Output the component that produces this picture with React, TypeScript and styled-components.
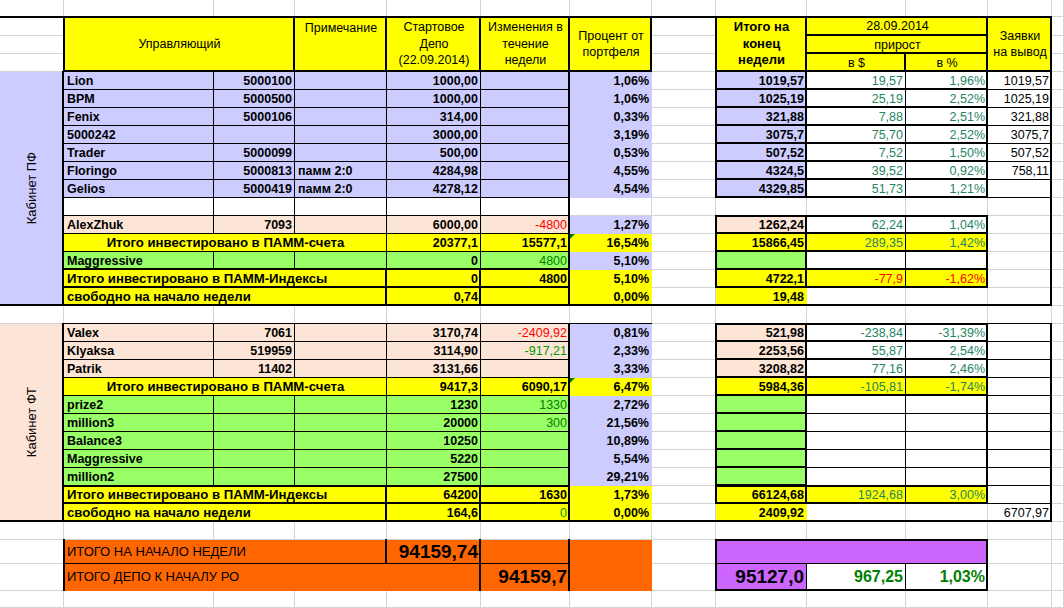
import React from 'react';
import styled, { createGlobalStyle, css } from 'styled-components';

const GRID = '#d4d4d4';
const YEL = '#ffff00';
const LAV = '#ccccff';
const PEACH = '#fce4d6';
const GRN = '#99ff66';
const ORG = '#ff6600';
const VIO = '#cc66ff';
const TEAL = '#24855f';
const GREEN = '#008000';
const LGREEN = '#009900';
const RED = '#ff0000';
const LBL = 13.2;

const COLS = [64, 150, 81, 92, 94, 89, 82, 64, 91, 99, 82, 64, 12];
const ROWS = [17, 19, 18, 18, ...Array(13).fill(18), 18, ...Array(11).fill(18), 18, 24, 27, 17];

type Spec = {
  r: number;
  c: number;
  rs?: number;
  cs?: number;
  bg?: string;
  t?: string;
  al?: 'l' | 'c' | 'r';
  va?: 't' | 'm';
  b?: boolean;
  col?: string;
  fs?: number;
  bd?: string;
  flag?: boolean;
  rot?: string;
  head?: boolean;
};

const specs: Spec[] = [];
const add = (s: Spec) => specs.push(s);

/* ---------- header ---------- */
add({ r: 2, c: 1, bd: '2000' });
add({ r: 2, c: 8, bd: '2000' });
add({ r: 2, c: 2, cs: 2, rs: 3, bg: YEL, t: 'Управляющий', al: 'c', bd: '2222', head: true });
add({ r: 2, c: 4, rs: 3, bg: YEL, t: 'Примечание', al: 'c', va: 't', bd: '2220', head: true });
add({ r: 2, c: 5, rs: 3, bg: YEL, t: 'Стартовое\nДепо\n(22.09.2014)', al: 'c', bd: '2220', head: true });
add({ r: 2, c: 6, rs: 3, bg: YEL, t: 'Изменения в\nтечение\nнедели', al: 'c', bd: '2220', head: true });
add({ r: 2, c: 7, rs: 3, bg: YEL, t: 'Процент от\nпортфеля', al: 'c', bd: '2220', head: true });
add({ r: 2, c: 9, rs: 3, bg: YEL, t: 'Итого на\nконец\nнедели', al: 'c', b: true, fs: 13, bd: '2222', head: true });
add({ r: 2, c: 10, cs: 2, bg: YEL, t: '28.09.2014', al: 'c', bd: '2220' });
add({ r: 3, c: 10, cs: 2, bg: YEL, t: 'прирост', al: 'c', bd: '0220' });
add({ r: 4, c: 10, bg: YEL, t: 'в $', al: 'c', bd: '0220' });
add({ r: 4, c: 11, bg: YEL, t: 'в %', al: 'c', bd: '0220' });
add({ r: 2, c: 12, rs: 3, bg: YEL, t: 'Заявки\nна вывод', al: 'c', bd: '2220', head: true });

/* ---------- section 1 ---------- */
add({ r: 5, c: 1, rs: 13, bg: LAV, rot: 'Кабинет ПФ', al: 'c', fs: 13, bd: '0220' });

const s1 = [
  ['Lion', '5000100', '', '1000,00', '1,06%', '1019,57', '19,57', '1,96%', '1019,57'],
  ['BPM', '5000500', '', '1000,00', '1,06%', '1025,19', '25,19', '2,52%', '1025,19'],
  ['Fenix', '5000106', '', '314,00', '0,33%', '321,88', '7,88', '2,51%', '321,88'],
  ['5000242', '', '', '3000,00', '3,19%', '3075,7', '75,70', '2,52%', '3075,7'],
  ['Trader', '5000099', '', '500,00', '0,53%', '507,52', '7,52', '1,50%', '507,52'],
  ['Floringo', '5000813', 'памм 2:0', '4284,98', '4,55%', '4324,5', '39,52', '0,92%', '758,11'],
  ['Gelios', '5000419', 'памм 2:0', '4278,12', '4,54%', '4329,85', '51,73', '1,21%', ''],
];
s1.forEach((d, i) => {
  const r = 5 + i;
  add({ r, c: 2, bg: LAV, t: d[0], b: true, bd: '0110' });
  add({ r, c: 3, bg: LAV, t: d[1], al: 'r', b: true, bd: '0110' });
  add({ r, c: 4, bg: LAV, t: d[2], b: true, fs: 12.5, bd: '0110' });
  add({ r, c: 5, bg: LAV, t: d[3], al: 'r', b: true, bd: '0110' });
  add({ r, c: 6, bg: LAV, bd: '0210' });
  add({ r, c: 7, bg: LAV, t: d[4], al: 'r', b: true });
  add({ r, c: 9, bg: LAV, t: d[5], al: 'r', b: true, bd: '0222' });
  add({ r, c: 10, t: d[6], al: 'r', col: TEAL, bd: '0120' });
  add({ r, c: 11, t: d[7], al: 'r', col: TEAL, bd: '0220' });
  add({ r, c: 12, t: d[8], al: 'r', bd: '0210' });
});

// row 12 (empty)
[2, 3, 4, 5].forEach((c) => add({ r: 12, c, bd: '0110' }));
add({ r: 12, c: 6, bd: '0210' });
add({ r: 12, c: 12, bd: '0200' });

// row 13 AlexZhuk
add({ r: 13, c: 2, bg: PEACH, t: 'AlexZhuk', b: true, bd: '0110' });
add({ r: 13, c: 3, bg: PEACH, t: '7093', al: 'r', b: true, bd: '0110' });
add({ r: 13, c: 4, bg: PEACH, bd: '0110' });
add({ r: 13, c: 5, bg: PEACH, t: '6000,00', al: 'r', b: true, bd: '0110' });
add({ r: 13, c: 6, bg: PEACH, t: '-4800', al: 'r', col: RED, bd: '0210' });
add({ r: 13, c: 7, bg: LAV, t: '1,27%', al: 'r', b: true });
add({ r: 13, c: 9, bg: PEACH, t: '1262,24', al: 'r', b: true, bd: '2222' });
add({ r: 13, c: 10, t: '62,24', al: 'r', col: TEAL, bd: '2120' });
add({ r: 13, c: 11, t: '1,04%', al: 'r', col: TEAL, bd: '2220' });
add({ r: 13, c: 12, bd: '0200' });

// row 14 total accounts
add({ r: 14, c: 2, cs: 3, bg: YEL, t: 'Итого инвестировано в ПАММ-счета', al: 'c', b: true, fs: LBL, bd: '0110' });
add({ r: 14, c: 5, bg: YEL, t: '20377,1', al: 'r', b: true, bd: '0110' });
add({ r: 14, c: 6, bg: YEL, t: '15577,1', al: 'r', b: true, bd: '0210' });
add({ r: 14, c: 7, bg: YEL, t: '16,54%', al: 'r', b: true, flag: true });
add({ r: 14, c: 9, bg: YEL, t: '15866,45', al: 'r', b: true, bd: '0222' });
add({ r: 14, c: 10, bg: YEL, t: '289,35', al: 'r', col: TEAL, bd: '0120' });
add({ r: 14, c: 11, bg: YEL, t: '1,42%', al: 'r', col: TEAL, bd: '0220' });
add({ r: 14, c: 12, bd: '0200' });

// row 15 Maggressive
add({ r: 15, c: 2, bg: GRN, t: 'Maggressive', b: true, bd: '0120' });
add({ r: 15, c: 3, bg: GRN, bd: '0120' });
add({ r: 15, c: 4, bg: GRN, bd: '0120' });
add({ r: 15, c: 5, bg: GRN, t: '0', al: 'r', b: true, bd: '0120' });
add({ r: 15, c: 6, bg: GRN, t: '4800', al: 'r', col: GREEN, bd: '0220' });
add({ r: 15, c: 7, bg: LAV, t: '5,10%', al: 'r', b: true });
add({ r: 15, c: 9, bg: GRN, bd: '0222' });
add({ r: 15, c: 10, bd: '0120' });
add({ r: 15, c: 11, bd: '0220' });
add({ r: 15, c: 12, bd: '0200' });

// row 16 total indexes
add({ r: 16, c: 2, cs: 3, bg: YEL, t: 'Итого инвестировано в ПАММ-Индексы', b: true, fs: LBL, bd: '0220' });
add({ r: 16, c: 5, bg: YEL, t: '0', al: 'r', b: true, bd: '0220' });
add({ r: 16, c: 6, bg: YEL, t: '4800', al: 'r', b: true, bd: '0220' });
add({ r: 16, c: 7, bg: YEL, t: '5,10%', al: 'r', b: true });
add({ r: 16, c: 9, bg: YEL, t: '4722,1', al: 'r', b: true, bd: '0222' });
add({ r: 16, c: 10, bg: YEL, t: '-77,9', al: 'r', col: RED, bd: '0120' });
add({ r: 16, c: 11, bg: YEL, t: '-1,62%', al: 'r', col: RED, bd: '0220' });
add({ r: 16, c: 12, bd: '0200' });

// row 17 free
add({ r: 17, c: 2, cs: 3, bg: YEL, t: 'свободно на начало недели', b: true, fs: LBL, bd: '0220' });
add({ r: 17, c: 5, bg: YEL, t: '0,74', al: 'r', b: true, bd: '0220' });
add({ r: 17, c: 6, bg: YEL, bd: '0220' });
add({ r: 17, c: 7, bg: YEL, t: '0,00%', al: 'r', b: true, bd: '0020' });
add({ r: 17, c: 8, bd: '0020' });
add({ r: 17, c: 9, bg: YEL, t: '19,48', al: 'r', b: true, bd: '0020' });
add({ r: 17, c: 10, bd: '0020' });
add({ r: 17, c: 11, bd: '0020' });
add({ r: 17, c: 12, bd: '0220' });

/* ---------- section 2 ---------- */
add({ r: 19, c: 1, rs: 11, bg: PEACH, rot: 'Кабинет ФТ', al: 'c', fs: 13, bd: '0220' });

const s2 = [
  ['Valex', '7061', '3170,74', '-2409,92', RED, '0,81%', '521,98', '-238,84', '-31,39%'],
  ['Klyaksa', '519959', '3114,90', '-917,21', LGREEN, '2,33%', '2253,56', '55,87', '2,54%'],
  ['Patrik', '11402', '3131,66', '', '', '3,33%', '3208,82', '77,16', '2,46%'],
];
s2.forEach((d, i) => {
  const r = 19 + i;
  const top = i === 0 ? '1' : '0';
  const topM = i === 0 ? '2' : '0';
  add({ r, c: 2, bg: PEACH, t: d[0], b: true, bd: top + '110' });
  add({ r, c: 3, bg: PEACH, t: d[1], al: 'r', b: true, bd: top + '110' });
  add({ r, c: 4, bg: PEACH, bd: top + '110' });
  add({ r, c: 5, bg: PEACH, t: d[2], al: 'r', b: true, bd: top + '110' });
  add({ r, c: 6, bg: PEACH, t: d[3], al: 'r', col: d[4], bd: top + '210' });
  add({ r, c: 7, bg: LAV, t: d[5], al: 'r', b: true, bd: top + '000' });
  add({ r, c: 9, bg: PEACH, t: d[6], al: 'r', b: true, bd: topM + '222' });
  add({ r, c: 10, t: d[7], al: 'r', col: TEAL, bd: topM + '120' });
  add({ r, c: 11, t: d[8], al: 'r', col: TEAL, bd: topM + '220' });
  add({ r, c: 12, bd: top + '210' });
});

// row 22 total accounts
add({ r: 22, c: 2, cs: 3, bg: YEL, t: 'Итого инвестировано в ПАММ-счета', al: 'c', b: true, fs: LBL, bd: '0110' });
add({ r: 22, c: 5, bg: YEL, t: '9417,3', al: 'r', b: true, bd: '0110' });
add({ r: 22, c: 6, bg: YEL, t: '6090,17', al: 'r', b: true, bd: '0210' });
add({ r: 22, c: 7, bg: YEL, t: '6,47%', al: 'r', b: true, flag: true });
add({ r: 22, c: 9, bg: YEL, t: '5984,36', al: 'r', b: true, bd: '0222' });
add({ r: 22, c: 10, bg: YEL, t: '-105,81', al: 'r', col: TEAL, bd: '0120' });
add({ r: 22, c: 11, bg: YEL, t: '-1,74%', al: 'r', col: TEAL, bd: '0220' });
add({ r: 22, c: 12, bd: '0210' });

const idx = [
  ['prize2', '1230', '1330', '2,72%'],
  ['million3', '20000', '300', '21,56%'],
  ['Balance3', '10250', '', '10,89%'],
  ['Maggressive', '5220', '', '5,54%'],
  ['million2', '27500', '', '29,21%'],
];
idx.forEach((d, i) => {
  const r = 23 + i;
  add({ r, c: 2, bg: GRN, t: d[0], b: true, bd: '0110' });
  add({ r, c: 3, bg: GRN, bd: '0110' });
  add({ r, c: 4, bg: GRN, bd: '0110' });
  add({ r, c: 5, bg: GRN, t: d[1], al: 'r', b: true, bd: '0110' });
  add({ r, c: 6, bg: GRN, t: d[2], al: 'r', col: GREEN, bd: '0210' });
  add({ r, c: 7, bg: LAV, t: d[3], al: 'r', b: true });
  add({ r, c: 9, bg: GRN, bd: '0222' });
  add({ r, c: 10, bd: '0110' });
  add({ r, c: 11, bd: '0210' });
  add({ r, c: 12, bd: '0210' });
});

// row 28 total indexes
add({ r: 28, c: 2, cs: 3, bg: YEL, t: 'Итого инвестировано в ПАММ-Индексы', b: true, fs: LBL, bd: '2220' });
add({ r: 28, c: 5, bg: YEL, t: '64200', al: 'r', b: true, bd: '2220' });
add({ r: 28, c: 6, bg: YEL, t: '1630', al: 'r', b: true, bd: '2220' });
add({ r: 28, c: 7, bg: YEL, t: '1,73%', al: 'r', b: true });
add({ r: 28, c: 9, bg: YEL, t: '66124,68', al: 'r', b: true, bd: '2222' });
add({ r: 28, c: 10, bg: YEL, t: '1924,68', al: 'r', col: TEAL, bd: '2120' });
add({ r: 28, c: 11, bg: YEL, t: '3,00%', al: 'r', col: TEAL, bd: '2220' });
add({ r: 28, c: 12, bd: '0210' });

// row 29 free
add({ r: 29, c: 2, cs: 3, bg: YEL, t: 'свободно на начало недели', b: true, fs: LBL, bd: '0220' });
add({ r: 29, c: 5, bg: YEL, t: '164,6', al: 'r', b: true, bd: '0220' });
add({ r: 29, c: 6, bg: YEL, t: '0', al: 'r', col: LGREEN, bd: '0220' });
add({ r: 29, c: 7, bg: YEL, t: '0,00%', al: 'r', b: true, bd: '0020' });
add({ r: 29, c: 8, bd: '0020' });
add({ r: 29, c: 9, bg: YEL, t: '2409,92', al: 'r', b: true, bd: '0020' });
add({ r: 29, c: 10, bd: '0020' });
add({ r: 29, c: 11, bd: '0020' });
add({ r: 29, c: 12, t: '6707,97', al: 'r', bd: '0220' });

/* ---------- bottom totals ---------- */
add({ r: 31, c: 2, cs: 3, bg: ORG, t: 'ИТОГО НА НАЧАЛО НЕДЕЛИ', fs: 13, bd: '0212' });
add({ r: 31, c: 5, bg: ORG, t: '94159,74', al: 'r', b: true, fs: 19, bd: '0210' });
add({ r: 31, c: 6, bg: ORG, bd: '0210' });
add({ r: 31, c: 7, bg: ORG });
add({ r: 31, c: 9, cs: 3, bg: VIO, bd: '2212' });
add({ r: 32, c: 2, cs: 4, bg: ORG, t: 'ИТОГО ДЕПО К НАЧАЛУ РО', fs: 13, bd: '0202' });
add({ r: 32, c: 6, bg: ORG, t: '94159,7', al: 'r', b: true, fs: 19, bd: '0200' });
add({ r: 32, c: 7, bg: ORG });
add({ r: 32, c: 9, bg: VIO, t: '95127,0', al: 'r', b: true, fs: 19, bd: '0122' });
add({ r: 32, c: 10, t: '967,25', al: 'r', b: true, fs: 16, col: GREEN, bd: '0120' });
add({ r: 32, c: 11, t: '1,03%', al: 'r', b: true, fs: 16, col: GREEN, bd: '0220' });

/* ---------- fill blanks ---------- */
const occ: boolean[][] = ROWS.map(() => COLS.map(() => false));
specs.forEach((s) => {
  for (let r = s.r; r < s.r + (s.rs ?? 1); r++)
    for (let c = s.c; c < s.c + (s.cs ?? 1); c++) occ[r - 1][c - 1] = true;
});
const cells: Spec[] = [...specs];
ROWS.forEach((_, ri) =>
  COLS.forEach((__, ci) => {
    if (!occ[ri][ci]) cells.push({ r: ri + 1, c: ci + 1 });
  })
);
cells.sort((a, b) => a.r - b.r || a.c - b.c);

/* ---------- styles ---------- */
const GlobalStyle = createGlobalStyle`
  html, body { margin: 0; padding: 0; background: #ffffff; }
  body { font-family: "Liberation Sans", Arial, sans-serif; }
`;

const Sheet = styled.div`
  display: grid;
  grid-template-columns: ${COLS.map((w) => `${w}px`).join(' ')};
  grid-template-rows: ${ROWS.map((h) => `${h}px`).join(' ')};
  width: 1064px;
  height: 608px;
  overflow: hidden;
  color: #000;
`;

const edge = (d: string) => (d === '2' ? 2 : d === '1' ? 1 : 0);

type CellProps = {
  $r: number;
  $c: number;
  $rs: number;
  $cs: number;
  $bg?: string;
  $al: 'l' | 'c' | 'r';
  $va: 't' | 'm';
  $bold: boolean;
  $color: string;
  $fs: number;
  $bd: string;
};

const Cell = styled.div<CellProps>`
  grid-row: ${(p) => `${p.$r} / span ${p.$rs}`};
  grid-column: ${(p) => `${p.$c} / span ${p.$cs}`};
  position: relative;
  box-sizing: border-box;
  min-width: 0;
  background: ${(p) => p.$bg || '#ffffff'};
  border-right: 1px solid ${(p) => p.$bg || GRID};
  border-bottom: 1px solid ${(p) => p.$bg || GRID};
  display: flex;
  align-items: ${(p) => (p.$va === 't' ? 'flex-start' : 'center')};
  justify-content: ${(p) => (p.$al === 'r' ? 'flex-end' : p.$al === 'c' ? 'center' : 'flex-start')};
  text-align: ${(p) => (p.$al === 'r' ? 'right' : p.$al === 'c' ? 'center' : 'left')};
  padding: ${(p) => (p.$va === 't' ? '3px 2px 0 3px' : '0 2px 0 3px')};
  white-space: nowrap;
  font-size: ${(p) => p.$fs}px;
  font-weight: ${(p) => (p.$bold ? 700 : 400)};
  color: ${(p) => p.$color};
  line-height: 14px;
  ${(p) =>
    p.$bd !== '0000' &&
    css`
      &::after {
        content: '';
        position: absolute;
        top: -1px;
        left: -1px;
        right: -1px;
        bottom: -1px;
        border-style: solid;
        border-color: #000;
        border-width: ${edge(p.$bd[0])}px ${edge(p.$bd[1])}px ${edge(p.$bd[2])}px ${edge(p.$bd[3])}px;
        z-index: 1;
        pointer-events: none;
      }
    `}
`;

const HeadText = styled.span`
  white-space: pre-line;
  line-height: 16.5px;
  text-align: center;
`;

const SideLabel = styled.span`
  writing-mode: vertical-rl;
  transform: rotate(180deg);
  line-height: 14px;
`;

const Flag = styled.span`
  position: absolute;
  top: 0;
  left: 0;
  width: 0;
  height: 0;
  border-top: 5px solid #008000;
  border-right: 5px solid transparent;
  z-index: 2;
`;

export default function App() {
  return (
    <>
      <GlobalStyle />
      <Sheet>
        {cells.map((s, i) => (
          <Cell
            key={i}
            $r={s.r}
            $c={s.c}
            $rs={s.rs ?? 1}
            $cs={s.cs ?? 1}
            $bg={s.bg}
            $al={s.al ?? 'l'}
            $va={s.va ?? 'm'}
            $bold={!!s.b}
            $color={s.col ?? '#000'}
            $fs={s.fs ?? 12.5}
            $bd={s.bd ?? '0000'}
          >
            {s.rot ? <SideLabel>{s.rot}</SideLabel> : s.head ? <HeadText>{s.t}</HeadText> : s.t}
            {s.flag && <Flag />}
          </Cell>
        ))}
      </Sheet>
    </>
  );
}
